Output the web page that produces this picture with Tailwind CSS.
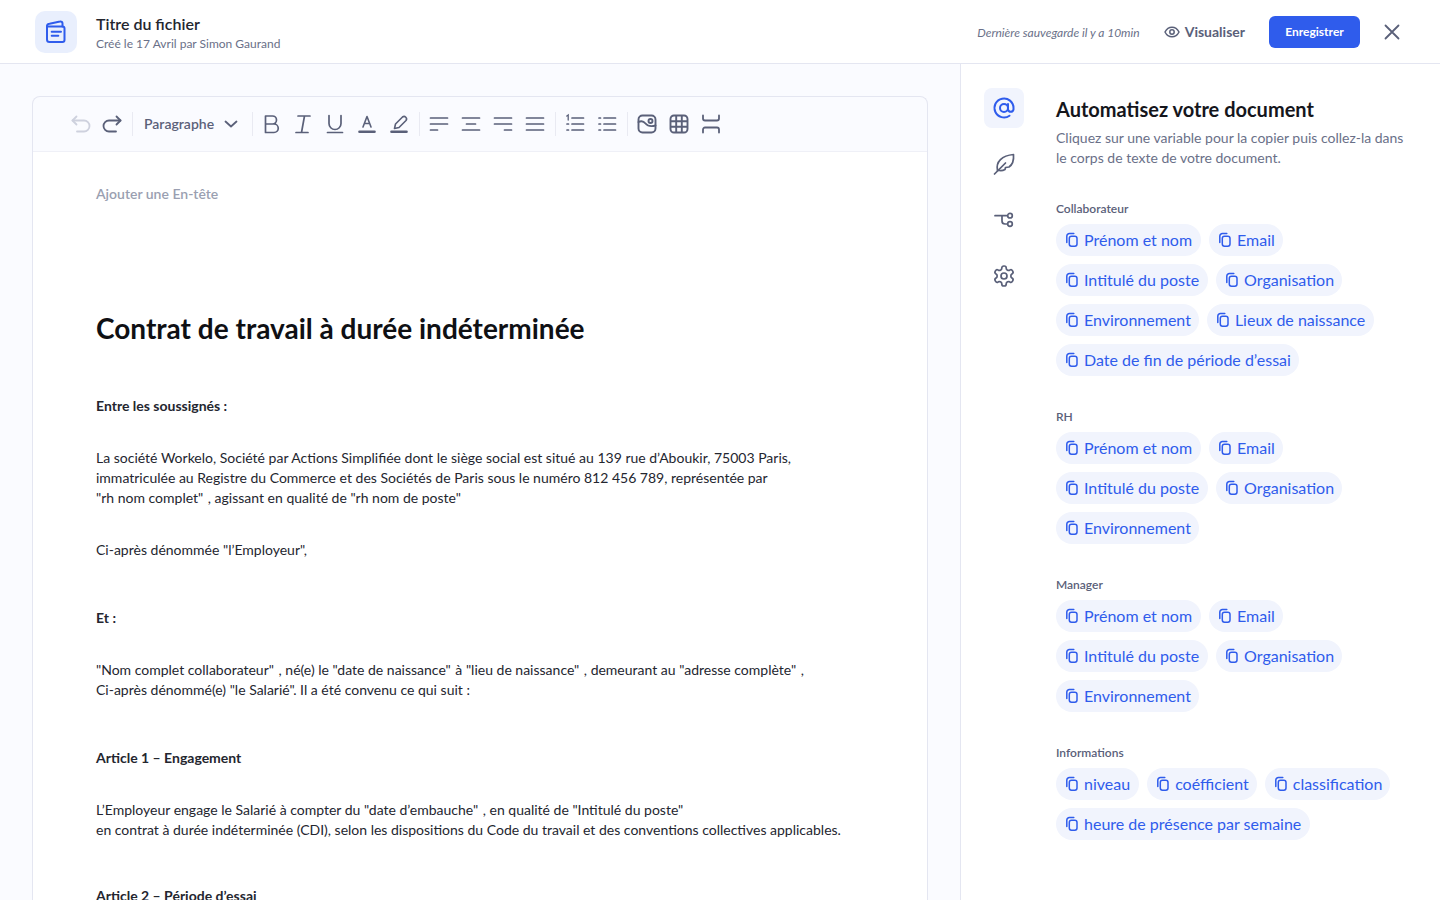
<!DOCTYPE html>
<html lang="fr">
<head>
    <meta charset="UTF-8">
    <meta name="viewport" content="width=device-width, initial-scale=1.0">
    <title>Titre du fichier</title>
    <script src="https://cdn.jsdelivr.net/npm/@tailwindcss/browser@4"></script>
</head>
<body class="h-screen overflow-hidden bg-white font-['Lato',sans-serif] text-[#5a6079]">
    <!-- Shared icons -->
    <svg class="hidden">
        <symbol id="copy" viewBox="0 0 16 16" fill="none" stroke="currentColor" stroke-width="1.5" stroke-linecap="round" stroke-linejoin="round">
            <rect x="5.3" y="4.2" width="7.7" height="10" rx="2.2"/>
            <path d="M2.800 10.500V4.200A2.600 2.600 0 0 1 5.400 1.600H9.800"/>
        </symbol>
    </svg>

    <!-- Header -->
    <header class="h-16 flex items-center border-b border-[#e4e6f1] pl-[35px] pr-[40px]">
        <div class="w-[42px] h-[42px] rounded-[10px] bg-[#e9effd] flex items-center justify-center">
            <svg class="w-6 h-6 text-[#2f5cec]" viewBox="0 0 24 24" fill="none" stroke="currentColor" stroke-width="2" stroke-linecap="round" stroke-linejoin="round">
                <path d="M3 6.500V19.500a2.500 2.500 0 0 0 2.500 2.500h13a2 2 0 0 0 2-2V8.500a2 2 0 0 0-2-2H3Z"/>
                <path d="M3 6.500A2.500 2.500 0 0 1 5.500 3.700L16 1.500a2 2 0 0 1 2.500 2v3"/>
                <path d="M7.700 11.700H17M7.700 15.700h6.600"/>
            </svg>
        </div>
        <div class="ml-[19px] pt-[2px]">
            <div class="text-base leading-5 font-semibold text-[#24262f]">Titre du fichier</div>
            <div class="text-xs leading-4 mt-[2px] text-[#6a7088]">Créé le 17 Avril par Simon Gaurand</div>
        </div>
        <div class="ml-auto flex items-center">
            <span class="text-xs italic text-[#6a7088] pt-[2px]">Dernière sauvegarde il y a 10min</span>
            <svg class="w-4 h-4 ml-6" viewBox="0 0 16 16" fill="none" stroke="currentColor" stroke-width="1.500">
                <path d="M1 8c1.600-3.200 4-4.800 7-4.800s5.400 1.600 7 4.800c-1.600 3.200-4 4.800-7 4.800S2.600 11.200 1 8Z"/>
                <circle cx="8" cy="8" r="2.200"/>
            </svg>
            <span class="ml-[5px] text-sm font-bold">Visualiser</span>
            <button class="ml-6 w-[91px] h-8 rounded-md bg-[#2f5cec] text-white text-xs font-bold">Enregistrer</button>
            <svg class="w-4 h-4 ml-6" viewBox="0 0 16 16" fill="none" stroke="currentColor" stroke-width="1.800" stroke-linecap="round">
                <path d="M1.500 1.500l13 13M14.500 1.500l-13 13"/>
            </svg>
        </div>
    </header>

    <div class="flex h-[836px]">
        <!-- Editor -->
        <main class="w-[960px] shrink-0 bg-[#fafbff] pl-8 pr-8 pt-8 overflow-hidden">
            <div class="border border-[#e4e6f1] rounded-t-lg border-b-0 h-[900px]">
                <!-- Toolbar -->
                <div class="h-[55px] flex items-center pl-[36px] border-b border-[#eff0f7] text-[#5a6079]">
                    <svg class="w-6 h-6 text-[#ced1de]" viewBox="0 0 24 24" fill="none" stroke="currentColor" stroke-width="1.800" stroke-linecap="round" stroke-linejoin="round"><path d="M7.500 4.500L3.500 8.500l4 4"/><path d="M3.500 8.500H15a5.500 5.500 0 0 1 0 11H8"/></svg>
                    <svg class="w-6 h-6 ml-[7px]" viewBox="0 0 24 24" fill="none" stroke="currentColor" stroke-width="1.800" stroke-linecap="round" stroke-linejoin="round"><path d="M16.500 4.500l4 4-4 4"/><path d="M20.500 8.500H9a5.500 5.500 0 0 0 0 11h7"/></svg>
                    <div class="w-px h-6 bg-[#e9eaf2] ml-2"></div>
                    <span class="ml-[11px] text-sm font-semibold">Paragraphe</span>
                    <svg class="w-4 h-4 ml-[9px]" viewBox="0 0 16 16" fill="none" stroke="currentColor" stroke-width="1.800" stroke-linecap="round" stroke-linejoin="round"><path d="M2.500 5.500L8 10.500l5.500-5"/></svg>
                    <div class="w-px h-6 bg-[#e9eaf2] ml-[13px]"></div>
                    <svg class="w-6 h-6 ml-[6px]" viewBox="0 0 24 24" fill="none" stroke="currentColor" stroke-width="1.700" stroke-linecap="round" stroke-linejoin="round"><path d="M6.500 4h7a4 4 0 0 1 0 8h-7zM6.500 12h8.500a4.200 4.200 0 0 1 0 8.500H6.500z"/></svg>
                    <svg class="w-6 h-6 ml-2" viewBox="0 0 24 24" fill="none" stroke="currentColor" stroke-width="1.700" stroke-linecap="round"><path d="M7 4h12M5 20.500h12M13.500 4l-3 16.500"/></svg>
                    <svg class="w-6 h-6 ml-2" viewBox="0 0 24 24" fill="none" stroke="currentColor" stroke-width="1.700" stroke-linecap="round"><path d="M6 3.500v8a6 6 0 0 0 12 0v-8M4.500 20.500h15"/></svg>
                    <svg class="w-6 h-6 ml-2" viewBox="0 0 24 24" fill="none" stroke="currentColor" stroke-width="1.600" stroke-linecap="round" stroke-linejoin="round"><path d="M8 15L12 4.500 16 15M9.500 11.500h5"/><path d="M4.500 19.800h15" stroke-width="2.600"/></svg>
                    <svg class="w-6 h-6 ml-2" viewBox="0 0 24 24" fill="none" stroke="currentColor" stroke-width="1.600" stroke-linecap="round" stroke-linejoin="round"><path d="M7.500 16.500l1-4.500L15.500 5a2.500 2.500 0 0 1 3.500 3.500L12 15.500z"/><path d="M4.500 19.800h15" stroke-width="2.600"/></svg>
                    <div class="w-px h-6 bg-[#e9eaf2] ml-2"></div>
                    <svg class="w-6 h-6 ml-[7px]" viewBox="0 0 24 24" fill="none" stroke="currentColor" stroke-width="1.700" stroke-linecap="round"><path d="M3.500 6h17M3.500 12h17M3.500 18h7"/></svg>
                    <svg class="w-6 h-6 ml-2" viewBox="0 0 24 24" fill="none" stroke="currentColor" stroke-width="1.700" stroke-linecap="round"><path d="M3.500 6h17M7.500 12h9M3.500 18h17"/></svg>
                    <svg class="w-6 h-6 ml-2" viewBox="0 0 24 24" fill="none" stroke="currentColor" stroke-width="1.700" stroke-linecap="round"><path d="M3.500 6h17M3.500 12h17M13.500 18h7"/></svg>
                    <svg class="w-6 h-6 ml-2" viewBox="0 0 24 24" fill="none" stroke="currentColor" stroke-width="1.700" stroke-linecap="round"><path d="M3.500 6h17M3.500 12h17M3.500 18h17"/></svg>
                    <div class="w-px h-6 bg-[#e9eaf2] ml-2"></div>
                    <svg class="w-6 h-6 ml-[7px]" viewBox="0 0 24 24" fill="none" stroke="currentColor" stroke-width="1.700" stroke-linecap="round"><path d="M9 6h11.500M9 12h11.500M9 18h11.500"/><path d="M3.800 4l1.400-1v5" stroke-width="1.300"/><path d="M4 12h1.500M4 18h1.500"/></svg>
                    <svg class="w-6 h-6 ml-2" viewBox="0 0 24 24" fill="none" stroke="currentColor" stroke-width="1.700" stroke-linecap="round"><path d="M9 6h11.500M9 12h11.500M9 18h11.500M4 6h1.500M4 12h1.500M4 18h1.500"/></svg>
                    <div class="w-px h-6 bg-[#e9eaf2] ml-2"></div>
                    <svg class="w-6 h-6 ml-[7px]" viewBox="0 0 24 24" fill="none" stroke="currentColor" stroke-width="1.900" stroke-linecap="round" stroke-linejoin="round"><rect x="3.500" y="3.500" width="17" height="17" rx="4"/><circle cx="15.500" cy="9" r="2"/><path d="M3.500 10c3-1.500 5-1 7 1.500s4.500 3.500 10 2"/></svg>
                    <svg class="w-6 h-6 ml-2" viewBox="0 0 24 24" fill="none" stroke="currentColor" stroke-width="1.900"><rect x="3.500" y="3.500" width="17" height="17" rx="3.500"/><path d="M9.200 3.500v17M14.800 3.500v17M3.500 9.200h17M3.500 14.800h17"/></svg>
                    <svg class="w-6 h-6 ml-2" viewBox="0 0 24 24" fill="none" stroke="currentColor" stroke-width="1.800" stroke-linecap="round" stroke-linejoin="round"><path d="M4 3.500v3a2 2 0 0 0 2 2h12a2 2 0 0 0 2-2v-3M4 20.500v-3a2 2 0 0 1 2-2h12a2 2 0 0 1 2 2v3"/></svg>
                </div>

                <!-- Document -->
                <article class="bg-white h-full pl-[63px] pt-8 text-sm leading-5 text-[#24262f]">
                    <p class="text-[#9a9fb1] font-semibold">Ajouter une En-tête</p>
                    <h1 class="mt-[104px] text-[28px] leading-10 font-bold text-[#0f1014]">Contrat de travail à durée indéterminée</h1>
                    <p class="mt-12 font-bold">Entre les soussignés :</p>
                    <p class="mt-8">La société Workelo, Société par Actions Simplifiée dont le siège social est situé au 139 rue d’Aboukir, 75003 Paris,<br>immatriculée au Registre du Commerce et des Sociétés de Paris sous le numéro 812 456 789, représentée par<br><span class="pr-px">"rh nom complet"</span> , agissant en qualité de "rh nom de poste"</p>
                    <p class="mt-8">Ci-après dénommée "l’Employeur",</p>
                    <p class="mt-12 font-bold">Et :</p>
                    <p class="mt-8"><span class="pr-px">"Nom complet collaborateur"</span> , né(e) le <span class="pr-px">"date de naissance"</span> à <span class="pr-px">"lieu de naissance"</span> , demeurant au <span class="pr-px">"adresse complète"</span> ,<br>Ci-après dénommé(e) "le Salarié". Il a été convenu ce qui suit :</p>
                    <p class="mt-12 font-bold">Article 1 – Engagement</p>
                    <p class="mt-8">L’Employeur engage le Salarié à compter du <span class="pr-px">"date d’embauche"</span> , en qualité de "Intitulé du poste"<br>en contrat à durée indéterminée (CDI), selon les dispositions du Code du travail et des conventions collectives applicables.</p>
                    <p class="mt-[46px] font-bold">Article 2 – Période d’essai</p>
                </article>
            </div>
        </main>

        <!-- Side nav -->
        <nav class="w-[96px] shrink-0 border-l border-[#e4e6f1] pt-6 pl-[23px] flex flex-col gap-4">
            <div class="w-10 h-10 rounded-lg bg-[#f1f4fd] flex items-center justify-center text-[#2f5cec]">
                <svg class="w-6 h-6" viewBox="0 0 24 24" fill="none" stroke="currentColor" stroke-width="2" stroke-linecap="round"><circle cx="12" cy="12" r="4"/><path d="M16 8v5.500a2.800 2.800 0 0 0 5.500 0V12a9.500 9.500 0 1 0-4 7.700"/></svg>
            </div>
            <div class="w-10 h-10 flex items-center justify-center">
                <svg class="w-6 h-6" viewBox="0 0 24 24" fill="none" stroke="currentColor" stroke-width="1.700" stroke-linecap="round" stroke-linejoin="round"><path d="M2.500 22L13.500 11"/><path d="M5.500 18.500C3.500 10 10 3.500 21.500 2.500c.5 6-1.500 10.500-4.500 12.500l-3.500.5-.5 2c-2.500 1.500-5 1.500-7.500.5z"/></svg>
            </div>
            <div class="w-10 h-10 flex items-center justify-center">
                <svg class="w-6 h-6" viewBox="0 0 24 24" fill="none" stroke="currentColor" stroke-width="1.700" stroke-linecap="round"><path d="M3 7.700h11.700M10 7.700V13a3 3 0 0 0 3 3h1.700"/><circle cx="18" cy="7.700" r="2.300"/><circle cx="18" cy="16" r="2.300"/></svg>
            </div>
            <div class="w-10 h-10 flex items-center justify-center">
                <svg class="w-6 h-6" viewBox="0 0 24 24" fill="none" stroke="currentColor" stroke-width="1.700" stroke-linecap="round" stroke-linejoin="round"><path d="M12.220 2h-.44a2 2 0 0 0-2 2v.18a2 2 0 0 1-1 1.730l-.43.250a2 2 0 0 1-2 0l-.15-.08a2 2 0 0 0-2.730.730l-.22.380a2 2 0 0 0 .730 2.730l.15.100a2 2 0 0 1 1 1.720v.510a2 2 0 0 1-1 1.740l-.15.090a2 2 0 0 0-.730 2.730l.22.380a2 2 0 0 0 2.730.730l.15-.08a2 2 0 0 1 2 0l.43.250a2 2 0 0 1 1 1.730V20a2 2 0 0 0 2 2h.44a2 2 0 0 0 2-2v-.18a2 2 0 0 1 1-1.730l.43-.250a2 2 0 0 1 2 0l.15.080a2 2 0 0 0 2.730-.730l.22-.390a2 2 0 0 0-.730-2.730l-.15-.08a2 2 0 0 1-1-1.740v-.5a2 2 0 0 1 1-1.740l.15-.09a2 2 0 0 0 .730-2.730l-.22-.38a2 2 0 0 0-2.730-.730l-.15.080a2 2 0 0 1-2 0l-.43-.25a2 2 0 0 1-1-1.730V4a2 2 0 0 0-2-2z"/><circle cx="12" cy="12" r="3"/></svg>
            </div>
        </nav>

        <!-- Variables panel -->
        <aside class="flex-1 pt-[31px] pr-8">
            <h2 class="text-xl leading-7 font-bold text-[#15161c]">Automatisez votre document</h2>
            <p class="mt-[5px] text-sm leading-5 text-[#6a7088]">Cliquez sur une variable pour la copier puis collez-la dans<br>le corps de texte de votre document.</p>

            <h3 class="mt-[33px] text-xs leading-4 font-semibold">Collaborateur</h3>
            <div class="mt-[7px] flex flex-col gap-2 text-[#2f5cec] text-base">
                <div class="flex gap-2">
                    <span class="h-8 rounded-full bg-[#f1f4fd] pl-2 pr-[9px] flex items-center gap-1"><svg class="w-4 h-4"><use href="#copy"/></svg>Prénom et nom</span>
                    <span class="h-8 rounded-full bg-[#f1f4fd] pl-2 pr-2 flex items-center gap-1"><svg class="w-4 h-4"><use href="#copy"/></svg>Email</span>
                </div>
                <div class="flex gap-2">
                    <span class="h-8 rounded-full bg-[#f1f4fd] pl-2 pr-[9px] flex items-center gap-1"><svg class="w-4 h-4"><use href="#copy"/></svg>Intitulé du poste</span>
                    <span class="h-8 rounded-full bg-[#f1f4fd] pl-2 pr-2 flex items-center gap-1"><svg class="w-4 h-4"><use href="#copy"/></svg>Organisation</span>
                </div>
                <div class="flex gap-2">
                    <span class="h-8 rounded-full bg-[#f1f4fd] pl-2 pr-2 flex items-center gap-1"><svg class="w-4 h-4"><use href="#copy"/></svg>Environnement</span>
                    <span class="h-8 rounded-full bg-[#f1f4fd] pl-2 pr-[9px] flex items-center gap-1"><svg class="w-4 h-4"><use href="#copy"/></svg>Lieux de naissance</span>
                </div>
                <div class="flex gap-2">
                    <span class="h-8 rounded-full bg-[#f1f4fd] pl-2 pr-2 flex items-center gap-1"><svg class="w-4 h-4"><use href="#copy"/></svg>Date de fin de période d’essai</span>
                </div>
            </div>

            <h3 class="mt-[33px] text-xs leading-4 font-semibold">RH</h3>
            <div class="mt-[7px] flex flex-col gap-2 text-[#2f5cec] text-base">
                <div class="flex gap-2">
                    <span class="h-8 rounded-full bg-[#f1f4fd] pl-2 pr-[9px] flex items-center gap-1"><svg class="w-4 h-4"><use href="#copy"/></svg>Prénom et nom</span>
                    <span class="h-8 rounded-full bg-[#f1f4fd] pl-2 pr-2 flex items-center gap-1"><svg class="w-4 h-4"><use href="#copy"/></svg>Email</span>
                </div>
                <div class="flex gap-2">
                    <span class="h-8 rounded-full bg-[#f1f4fd] pl-2 pr-[9px] flex items-center gap-1"><svg class="w-4 h-4"><use href="#copy"/></svg>Intitulé du poste</span>
                    <span class="h-8 rounded-full bg-[#f1f4fd] pl-2 pr-2 flex items-center gap-1"><svg class="w-4 h-4"><use href="#copy"/></svg>Organisation</span>
                </div>
                <div class="flex gap-2">
                    <span class="h-8 rounded-full bg-[#f1f4fd] pl-2 pr-2 flex items-center gap-1"><svg class="w-4 h-4"><use href="#copy"/></svg>Environnement</span>
                </div>
            </div>

            <h3 class="mt-[33px] text-xs leading-4 font-semibold">Manager</h3>
            <div class="mt-[7px] flex flex-col gap-2 text-[#2f5cec] text-base">
                <div class="flex gap-2">
                    <span class="h-8 rounded-full bg-[#f1f4fd] pl-2 pr-[9px] flex items-center gap-1"><svg class="w-4 h-4"><use href="#copy"/></svg>Prénom et nom</span>
                    <span class="h-8 rounded-full bg-[#f1f4fd] pl-2 pr-2 flex items-center gap-1"><svg class="w-4 h-4"><use href="#copy"/></svg>Email</span>
                </div>
                <div class="flex gap-2">
                    <span class="h-8 rounded-full bg-[#f1f4fd] pl-2 pr-[9px] flex items-center gap-1"><svg class="w-4 h-4"><use href="#copy"/></svg>Intitulé du poste</span>
                    <span class="h-8 rounded-full bg-[#f1f4fd] pl-2 pr-2 flex items-center gap-1"><svg class="w-4 h-4"><use href="#copy"/></svg>Organisation</span>
                </div>
                <div class="flex gap-2">
                    <span class="h-8 rounded-full bg-[#f1f4fd] pl-2 pr-2 flex items-center gap-1"><svg class="w-4 h-4"><use href="#copy"/></svg>Environnement</span>
                </div>
            </div>

            <h3 class="mt-[33px] text-xs leading-4 font-semibold">Informations</h3>
            <div class="mt-[7px] flex flex-col gap-2 text-[#2f5cec] text-base">
                <div class="flex gap-2">
                    <span class="h-8 rounded-full bg-[#f1f4fd] pl-2 pr-[9px] flex items-center gap-1"><svg class="w-4 h-4"><use href="#copy"/></svg>niveau</span>
                    <span class="h-8 rounded-full bg-[#f1f4fd] pl-2 pr-2 flex items-center gap-1"><svg class="w-4 h-4"><use href="#copy"/></svg>coéfficient</span>
                    <span class="h-8 rounded-full bg-[#f1f4fd] pl-2 pr-2 flex items-center gap-1"><svg class="w-4 h-4"><use href="#copy"/></svg>classification</span>
                </div>
                <div class="flex gap-2">
                    <span class="h-8 rounded-full bg-[#f1f4fd] pl-2 pr-[9px] flex items-center gap-1"><svg class="w-4 h-4"><use href="#copy"/></svg>heure de présence par semaine</span>
                </div>
            </div>
        </aside>
    </div>
</body>
</html>
